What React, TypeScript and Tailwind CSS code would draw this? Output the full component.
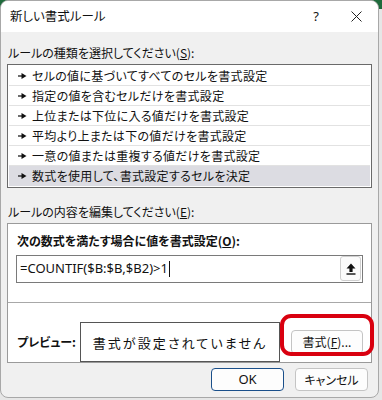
import React from "react";

const jp = { fontFamily: '"Noto Sans CJK JP", "Noto Sans", sans-serif', fontFeatureSettings: '"palt"' } as React.CSSProperties;

function Pointer() {
  return (
    <svg width="9" height="8" viewBox="0 0 9 8" className="shrink-0">
      <rect x="0" y="3.4" width="4" height="1.2" fill="#111" />
      <polygon points="3.5,1 8.5,4 3.5,7" fill="#111" />
    </svg>
  );
}

const rules = [
  "セルの値に基づいてすべてのセルを書式設定",
  "指定の値を含むセルだけを書式設定",
  "上位または下位に入る値だけを書式設定",
  "平均より上または下の値だけを書式設定",
  "一意の値または重複する値だけを書式設定",
  "数式を使用して、書式設定するセルを決定",
];

export default function App() {
  return (
    <div className="w-[382px] h-[400px] bg-[linear-gradient(#1f6b3c_0_9px,#e6e6e6_9px)] overflow-hidden" style={jp}>
      <div className="w-[379px] h-[398px] rounded-[8px] border border-[#a8a8a8] bg-[#f0f0f0] overflow-hidden flex flex-col text-[#111]">
        {/* title bar */}
        <div className="h-[31px] bg-white flex items-center pl-[9px] shrink-0">
          <span className="text-[12.5px] leading-none">新しい書式ルール</span>
          <span className="ml-auto text-[13px] leading-none mr-[32px]" style={{ fontFamily: '"Noto Sans", sans-serif' }}>?</span>
          <svg width="11" height="11" viewBox="0 0 11 11" className="mr-[16px]">
            <path d="M0.5 0.5 L10.5 10.5 M10.5 0.5 L0.5 10.5" stroke="#222" strokeWidth="1" />
          </svg>
        </div>
        {/* body */}
        <div className="px-[6px] flex flex-col">
          <div className="mt-[13px] h-[16px] flex items-center pl-[1px] text-[12px] leading-none">
            ルールの種類を選択してください(<span className="underline">S</span>):
          </div>
          <div className="mt-[3px] h-[124px] border border-[#6a6a6a] bg-white p-[1px] flex flex-col">
            {rules.map((r, i) => (
              <div
                key={i}
                className={`h-[20px] flex items-center pl-[9px] gap-[5px] text-[12px] leading-none ${i < 5 ? "border-b border-[#e2e2e2]" : ""} ${i === 5 ? "bg-[#dcdce2]" : ""}`}
              >
                <Pointer />
                <span className="tracking-[0.3px]">{r}</span>
              </div>
            ))}
          </div>
          <div className="mt-[16px] h-[16px] flex items-center pl-[1px] text-[12px] leading-none">
            ルールの内容を編集してください(<span className="underline">E</span>):
          </div>
          <div className="mt-[3px] h-[140px] border border-[#9a9a9a] bg-white flex flex-col relative">
            <div className="mt-[9px] h-[16px] flex items-center pl-[9px] text-[12px] font-bold leading-none">
              次の数式を満たす場合に値を書式設定(<span className="underline">O</span>):
            </div>
            <div className="mt-[6px] mx-[8px] h-[29px] border border-[#7a7a7a] flex items-center pl-[3px] pr-[1px]">
              <span className="text-[13px] leading-none" style={{ fontFamily: '"Noto Sans", sans-serif' }}>=COUNTIF($B:$B,$B2)&gt;1</span>
              <span className="w-[1px] h-[16px] bg-[#111] ml-[1px]" />
              <div className="ml-auto w-[21px] h-[25px] border border-[#cfcfcf] rounded-[3px] bg-[#fbfbfb] flex items-center justify-center">
                <svg width="10" height="12" viewBox="0 0 10 12">
                  <polygon points="5,0.5 9.5,5.5 6.6,5.5 6.6,9 3.4,9 3.4,5.5 0.5,5.5" fill="#111" />
                  <rect x="0.5" y="10.3" width="9" height="1.4" fill="#111" />
                </svg>
              </div>
            </div>
            <div className="mt-[19px] h-[1px] bg-[#a8a8a8]" />
            <div className="mt-[19px] flex items-center">
              <span className="pl-[9px] w-[72px] text-[12px] font-bold leading-none">プレビュー:</span>
              <div className="w-[200px] h-[40px] border border-[#555] flex items-center justify-center">
                <span className="text-[13px] leading-none tracking-[2.1px]">書式が設定されていません</span>
              </div>
              <div className="ml-[11px] w-[72px] h-[24px] border border-[#c4c4c4] rounded-[4px] bg-[#fdfdfd] flex items-center justify-center text-[12px] leading-none">
                書式(<span className="underline">F</span>)...
              </div>
            </div>
            <div className="absolute left-[272px] top-[90px] w-[94px] h-[42px] border-[4px] border-[#d9000f] rounded-[11px]" />
          </div>
          <div className="mt-[5px] flex justify-end gap-[11px] pr-[4px]">
            <div className="w-[73px] h-[23px] border-[1.5px] border-[#1a4f8a] rounded-[4px] bg-[#fdfdfd] flex items-center justify-center text-[13px] leading-none" style={{ fontFamily: '"Noto Sans", sans-serif' }}>
              OK
            </div>
            <div className="w-[73px] h-[23px] border border-[#c4c4c4] rounded-[4px] bg-[#fdfdfd] flex items-center justify-center text-[12px] leading-none">
              キャンセル
            </div>
          </div>
        </div>
      </div>
    </div>
  );
}
